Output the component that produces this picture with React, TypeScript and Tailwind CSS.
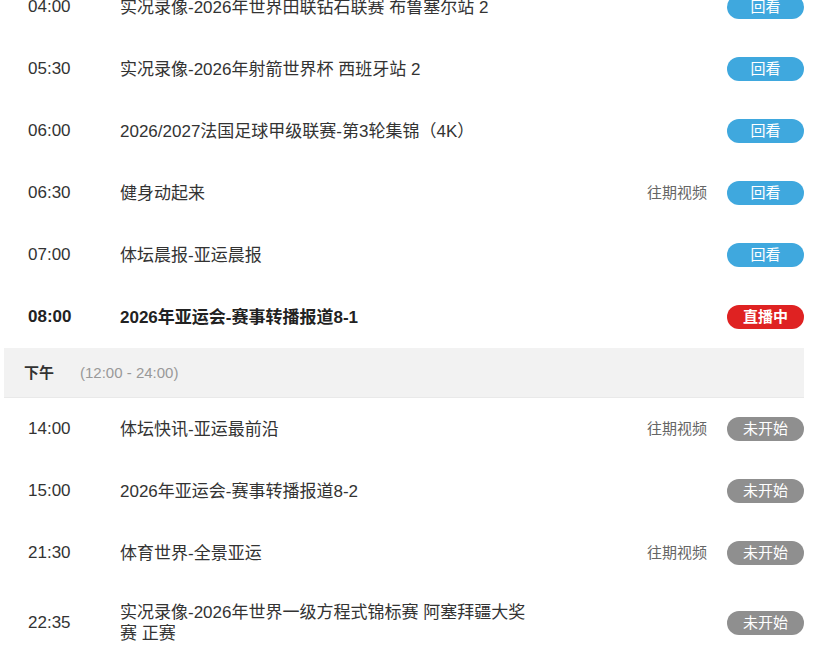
type Status = "replay" | "live" | "upcoming";

type Item = {
  time: string;
  title: string;
  past?: boolean;
  status: Status;
};

const morning: Item[] = [
  { time: "04:00", title: "实况录像-2026年世界田联钻石联赛 布鲁塞尔站 2", status: "replay" },
  { time: "05:30", title: "实况录像-2026年射箭世界杯 西班牙站 2", status: "replay" },
  { time: "06:00", title: "2026/2027法国足球甲级联赛-第3轮集锦（4K）", status: "replay" },
  { time: "06:30", title: "健身动起来", past: true, status: "replay" },
  { time: "07:00", title: "体坛晨报-亚运晨报", status: "replay" },
  { time: "08:00", title: "2026年亚运会-赛事转播报道8-1", status: "live" },
];

const afternoon: Item[] = [
  { time: "14:00", title: "体坛快讯-亚运最前沿", past: true, status: "upcoming" },
  { time: "15:00", title: "2026年亚运会-赛事转播报道8-2", status: "upcoming" },
  { time: "21:30", title: "体育世界-全景亚运", past: true, status: "upcoming" },
  { time: "22:35", title: "实况录像-2026年世界一级方程式锦标赛 阿塞拜疆大奖赛 正赛", status: "upcoming" },
];

function Badge({ status }: { status: Status }) {
  if (status === "live") {
    return <span className="flex h-[24px] w-[77px] items-center justify-center rounded-full bg-[#df2222] text-[15px] text-white">直播中</span>;
  }
  if (status === "upcoming") {
    return <span className="flex h-[24px] w-[77px] items-center justify-center rounded-full bg-[#8f8f8f] text-[15px] text-white">未开始</span>;
  }
  return <span className="flex h-[24px] w-[77px] items-center justify-center rounded-full bg-[#3fa8de] text-[15px] text-white">回看</span>;
}

function Row({ item }: { item: Item }) {
  const live = item.status === "live";
  return (
    <div className={`flex min-h-[62px] items-center py-[18px] pl-[24px] text-[17px] ${live ? "font-bold text-[#222]" : "text-[#333]"}`}>
      <div className="w-[92px] shrink-0">{item.time}</div>
      <div className="w-[415px] leading-[21px]">{item.title}</div>
      <div className="flex flex-1 items-center justify-end gap-[20px]">
        {item.past && <span className="text-[15px] text-[#666]">往期视频</span>}
        <Badge status={item.status} />
      </div>
    </div>
  );
}

export default function App() {
  return (
    <div className="h-[663px] overflow-hidden bg-white" style={{ fontFamily: '"Liberation Sans", "Noto Sans CJK SC", sans-serif' }}>
      <div className="ml-[4px] mt-[-24px] w-[800px]">
        {morning.map((item) => (
          <Row key={item.time} item={item} />
        ))}
        <div className="flex h-[50px] items-center gap-[26px] border-b border-[#e9e9e9] bg-[#f2f2f2] pl-[20px] pt-[2px] text-[15px]">
          <span className="font-bold text-[#333]">下午</span>
          <span className="text-[#999]">(12:00 - 24:00)</span>
        </div>
        {afternoon.map((item) => (
          <Row key={item.time} item={item} />
        ))}
      </div>
    </div>
  );
}
